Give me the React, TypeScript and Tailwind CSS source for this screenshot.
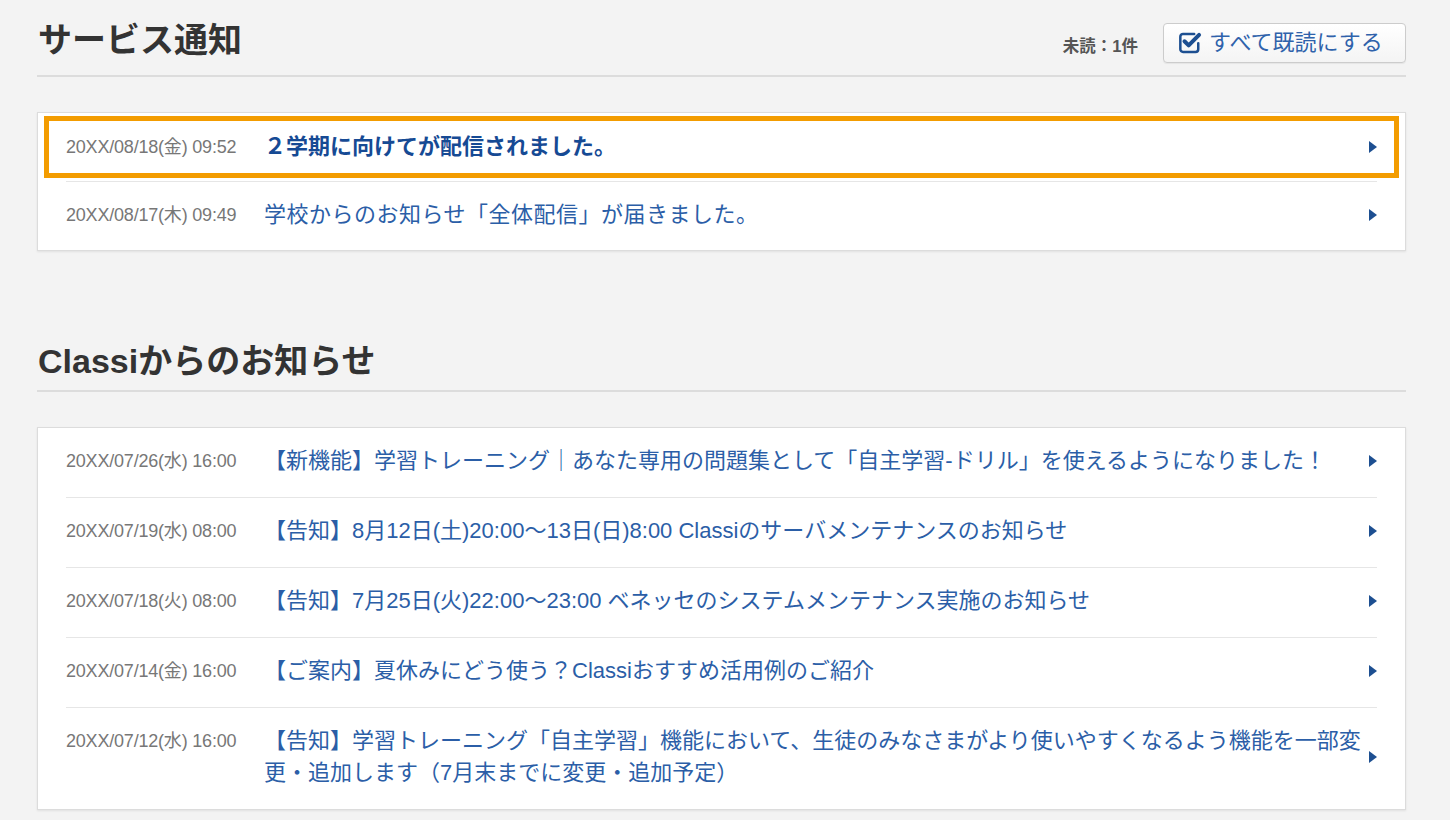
import React from 'react'

interface NoticeItem {
  date: string
  title: string
}

const serviceItems: NoticeItem[] = [
  { date: '20XX/08/18(金) 09:52', title: '２学期に向けてが配信されました。' },
  { date: '20XX/08/17(木) 09:49', title: '学校からのお知らせ「全体配信」が届きました。' },
]

const classiItems: NoticeItem[] = [
  {
    date: '20XX/07/26(水) 16:00',
    title: '【新機能】学習トレーニング｜あなた専用の問題集として「自主学習-ドリル」を使えるようになりました！',
  },
  {
    date: '20XX/07/19(水) 08:00',
    title: '【告知】8月12日(土)20:00～13日(日)8:00 Classiのサーバメンテナンスのお知らせ',
  },
  {
    date: '20XX/07/18(火) 08:00',
    title: '【告知】7月25日(火)22:00～23:00 ベネッセのシステムメンテナンス実施のお知らせ',
  },
  {
    date: '20XX/07/14(金) 16:00',
    title: '【ご案内】夏休みにどう使う？Classiおすすめ活用例のご紹介',
  },
  {
    date: '20XX/07/12(水) 16:00',
    title:
      '【告知】学習トレーニング「自主学習」機能において、生徒のみなさまがより使いやすくなるよう機能を一部変更・追加します（7月末までに変更・追加予定）',
  },
]

const font = { fontFamily: '"Liberation Sans", "Noto Sans CJK JP", sans-serif' }

function Chevron() {
  return (
    <span className="ml-auto self-center w-0 h-0 shrink-0 border-y-[6px] border-y-transparent border-l-[8px] border-l-[#1d4f91]" />
  )
}

function DateText({ children }: { children: string }) {
  return (
    <span className="w-[198px] shrink-0 text-[18px] leading-[32px] tracking-[-0.2px] text-[#777]">
      {children}
    </span>
  )
}

function CheckSquare() {
  return (
    <svg width="25" height="25" viewBox="0 0 24 24" fill="none" className="shrink-0 -mt-[2px]">
      <path
        d="M16.5 3.8H5.8A2.6 2.6 0 0 0 3.2 6.4v12A2.6 2.6 0 0 0 5.8 21h12a2.6 2.6 0 0 0 2.6-2.6v-5.6"
        stroke="#1d4f91"
        strokeWidth="2.4"
        strokeLinecap="round"
      />
      <path d="M7.2 10.8l4 4L21.2 4.6" stroke="#1d4f91" strokeWidth="3.8" strokeLinecap="round" strokeLinejoin="round" />
    </svg>
  )
}

export default function App() {
  return (
    <div className="min-h-[820px] bg-[#f3f3f3] pl-[37px] pr-[44px] pt-[16px] pb-[20px]" style={font}>
      {/* service notices */}
      <div className="flex items-end justify-between border-b-2 border-[#dcdcdc] pb-[11px] pl-[1px]">
        <h1 className="text-[34px] leading-[48px] font-bold text-[#333]">サービス通知</h1>
        <div className="flex items-end gap-[25px]">
          <span className="mb-[8px] text-[16.5px] leading-[20px] font-bold text-[#555]">未読：1件</span>
          <button className="mb-[1px] flex h-[40px] w-[243px] items-center gap-[7px] rounded-[4px] border border-[#ccc] bg-gradient-to-b from-white to-[#f4f4f4] pl-[13px] text-[22px] leading-[28px] text-[#2f62ab] shadow-[0_1px_1px_rgba(0,0,0,0.06)]">
            <CheckSquare />
            すべて既読にする
          </button>
        </div>
      </div>

      <div className="mt-[35px] border border-[#dcdcdc] bg-white px-[6px] pt-[3px] pb-[2px] shadow-[0_1px_2px_rgba(0,0,0,0.08)]">
        <div className="flex h-[62px] items-center border-[5px] border-[#f39c00] px-[17px]">
          <DateText>{serviceItems[0].date}</DateText>
          <span className="text-[22px] leading-[32px] font-bold text-[#164a94]">{serviceItems[0].title}</span>
          <Chevron />
        </div>
        <div className="mx-[22px] mt-[3px] flex h-[67px] items-center border-t border-[#e6e6e6]">
          <DateText>{serviceItems[1].date}</DateText>
          <span className="text-[22px] leading-[32px] tracking-[0.5px] text-[#2b5ea7]">{serviceItems[1].title}</span>
          <Chevron />
        </div>
      </div>

      {/* classi notices */}
      <div className="mt-[86px] border-b-2 border-[#dcdcdc] pb-[5px] pl-[1px]">
        <h2 className="text-[34px] leading-[48px] font-bold text-[#333]">Classiからのお知らせ</h2>
      </div>

      <div className="mt-[35px] border border-[#dcdcdc] bg-white px-[28px] shadow-[0_1px_2px_rgba(0,0,0,0.08)]">
        {classiItems.map((item, i) => (
          <div
            key={item.date}
            className={`flex items-start pt-[17px] pb-[20px] ${i > 0 ? 'border-t border-[#e6e6e6]' : ''}`}
          >
            <DateText>{item.date}</DateText>
            <span className="w-[1104px] text-[22px] leading-[32px] text-[#2b5ea7]">{item.title}</span>
            <Chevron />
          </div>
        ))}
      </div>
    </div>
  )
}
